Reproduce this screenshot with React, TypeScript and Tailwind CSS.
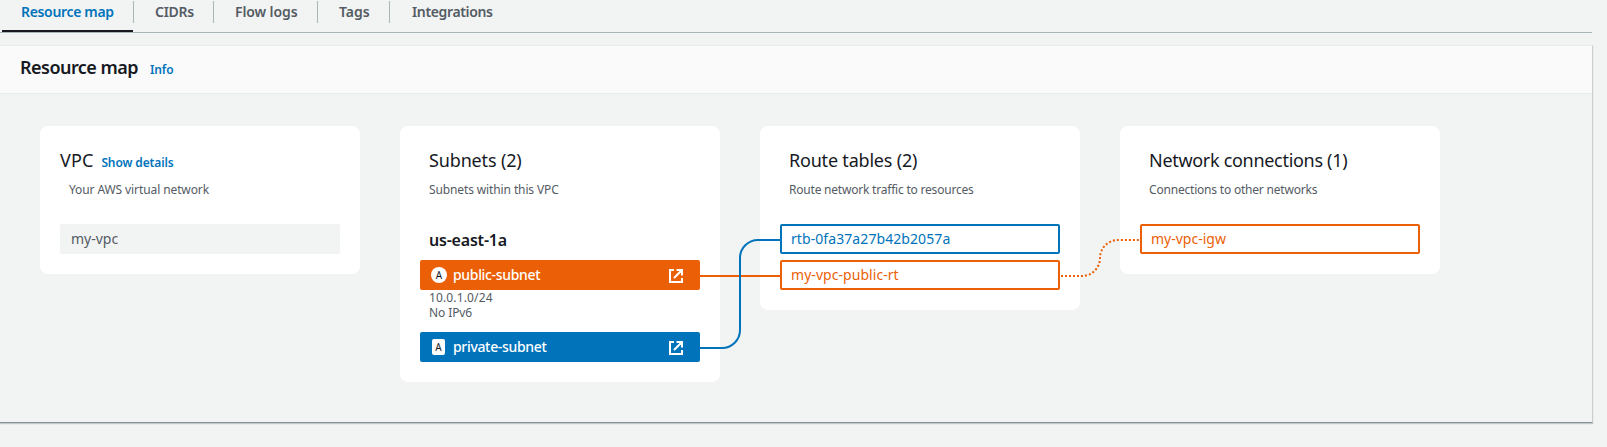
import type { ReactNode } from "react";

const tabs = [
  { label: "Resource map", width: "w-[132px]", spacing: "tracking-[-0.33px]", active: true },
  { label: "CIDRs", width: "w-20", spacing: "tracking-[-0.25px]" },
  { label: "Flow logs", width: "w-[104px]", spacing: "tracking-[-0.1px]" },
  { label: "Tags", width: "w-[72px]", spacing: "tracking-[-0.05px]" },
  { label: "Integrations", width: "", spacing: "tracking-[-0.36px]" },
];

function Tabs() {
  return (
    <nav className="mr-[15px] flex h-[33px] border-b border-[#aab7b8] pl-0.5 pt-px text-sm font-semibold leading-[22px]">
      {tabs.map((tab, i) => (
        <div key={tab.label} className={`relative flex h-[22px] shrink-0 ${tab.width} ${tab.active ? "pl-[19px] text-[#0073bb]" : "text-[#545b64]"} ${i < tabs.length - 1 ? "border-r border-[#aab7b8]" : "pl-[22px]"} ${i > 0 && i < tabs.length - 1 ? "pl-[21px]" : ""}`}>
          <span className={`whitespace-nowrap ${tab.spacing}`}>{tab.label}</span>
          {tab.active && <span className="absolute left-0 top-[29px] h-0.5 w-[131px] bg-[#16191f]" />}
        </div>
      ))}
    </nav>
  );
}

function Card({ title, titleSpacing, subtitle, subtitleSpacing, action, children }: {
  title: string;
  titleSpacing: string;
  subtitle: string;
  subtitleSpacing: string;
  action?: ReactNode;
  children: ReactNode;
}) {
  return (
    <section className="w-80 rounded-lg bg-white px-5 pb-5 pt-[23px]">
      <div className={`flex h-[22px] items-baseline whitespace-nowrap leading-[22px] ${action ? "" : "pl-[9px]"}`}>
        <h3 className={`text-lg/[22px] text-[#16191f] ${titleSpacing}`}>{title}</h3>
        {action}
      </div>
      <p className={`mb-[25px] mt-2.5 whitespace-nowrap pl-[9px] text-xs/[18px] text-[#545b64] ${subtitleSpacing}`}>{subtitle}</p>
      {children}
    </section>
  );
}

function ExternalIcon() {
  return (
    <svg className="ml-auto mr-[17px] mt-px size-3.5" viewBox="0 0 14 14" fill="none" stroke="white" strokeWidth="2">
      <path d="M5 1H1v12h12V9M7.5 1H13v5.5M13 1 5 9" />
    </svg>
  );
}

function Subnet({ name, kind }: { name: string; kind: "public" | "private" }) {
  const isPublic = kind === "public";
  return (
    <div className={`flex h-[30px] items-center rounded-xs text-sm font-medium text-white ${isPublic ? "bg-[#eb5f07] pl-[11px]" : "bg-[#0073bb] pl-3"}`}>
      <span className={`flex h-4 items-center justify-center bg-white text-[10px] font-normal leading-4 text-[#16191f] ${isPublic ? "mr-1.5 w-4 rounded-full" : "mr-2 w-[13px] rounded-xs"}`}>A</span>
      <span className="whitespace-nowrap tracking-[-0.33px]">{name}</span>
      <ExternalIcon />
    </div>
  );
}

function Resource({ name, spacing, color }: { name: string; spacing: string; color: string }) {
  return <div className={`flex h-[30px] items-center rounded-xs border-2 pl-[9px] text-sm ${spacing} ${color}`}>{name}</div>;
}

function Connectors() {
  return (
    <svg className="pointer-events-none absolute left-0 top-0 h-[328px] w-full" fill="none" strokeWidth="2">
      <path d="M700 182H780" stroke="#eb5f07" />
      <path d="M700 254H722A18 18 0 0 0 740 236V164A18 18 0 0 1 758 146H780" stroke="#0073bb" />
      <path d="M1061 182H1082A18 18 0 0 0 1100 164A18 18 0 0 1 1118 146H1140" stroke="#eb5f07" strokeDasharray="2 2" />
    </svg>
  );
}

export default function App() {
  return (
    <main className="h-[447px] overflow-hidden bg-[#f2f3f3] font-['Noto_Sans',sans-serif] text-[#16191f]">
      <Tabs />
      <div className="mr-3.5 mt-3 h-[378px] border-b border-r border-t border-b-[#879596] border-r-[#c9cece] border-t-[#eaeded] shadow-[0_1px_1px_0_rgba(0,28,36,0.2)]">
        <header className="flex h-12 items-baseline border-b border-[#eaeded] bg-[#fafafa] pl-5 pt-[10px]">
          <h2 className="text-lg/[22px] font-semibold tracking-[-0.53px]">Resource map</h2>
          <a className="ml-3 text-xs/[22px] font-semibold tracking-[-0.11px] text-[#0073bb]">Info</a>
        </header>
        <div className="relative flex items-start gap-10 pl-10 pt-8">
          <Card title="VPC" titleSpacing="tracking-[0.1px]" subtitle="Your AWS virtual network" subtitleSpacing="tracking-[-0.1px]"
            action={<a className="ml-2 text-xs/[22px] font-semibold tracking-[-0.12px] text-[#0073bb]">Show details</a>}>
            <div className="flex h-[30px] items-center rounded-xs bg-[#f2f3f3] pl-[11px] text-sm text-[#545b64]">my-vpc</div>
          </Card>
          <Card title="Subnets (2)" titleSpacing="tracking-[-0.15px]" subtitle="Subnets within this VPC" subtitleSpacing="tracking-[-0.12px]">
            <h4 className="mb-2.5 pl-[9px] pt-1.5 text-base/[20px] font-semibold tracking-[-0.2px]">us-east-1a</h4>
            <Subnet name="public-subnet" kind="public" />
            <div className="mb-3 pl-[9px] text-xs/[15px] text-[#545b64]">
              <p className="tracking-[0.14px]">10.0.1.0/24</p>
              <p className="tracking-[-0.11px]">No IPv6</p>
            </div>
            <Subnet name="private-subnet" kind="private" />
          </Card>
          <Card title="Route tables (2)" titleSpacing="tracking-[-0.2px]" subtitle="Route network traffic to resources" subtitleSpacing="tracking-[-0.21px]">
            <div className="flex flex-col gap-1.5">
              <Resource name="rtb-0fa37a27b42b2057a" spacing="tracking-[0.08px]" color="border-[#0073bb] text-[#0073bb]" />
              <Resource name="my-vpc-public-rt" spacing="tracking-[0.05px]" color="border-[#eb5f07] text-[#eb5f07]" />
            </div>
          </Card>
          <Card title="Network connections (1)" titleSpacing="tracking-[-0.3px]" subtitle="Connections to other networks" subtitleSpacing="tracking-[-0.2px]">
            <Resource name="my-vpc-igw" spacing="tracking-normal" color="border-[#eb5f07] text-[#eb5f07]" />
          </Card>
          <Connectors />
        </div>
      </div>
    </main>
  );
}
